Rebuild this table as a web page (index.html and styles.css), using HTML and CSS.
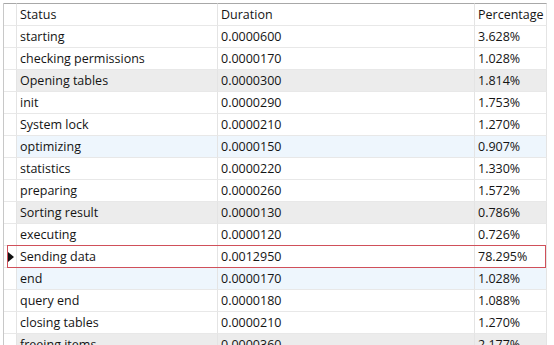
FILE: index.html
```html
<!DOCTYPE html>
<html lang="en">
<head>
    <meta charset="UTF-8">
    <title>Query Profile</title>
    <link rel="stylesheet" href="styles.css">
</head>
<body>
    <div class="grid">
        <table>
            <thead>
                <tr>
                    <th class="ind"></th>
                    <th class="col-status">Status</th>
                    <th class="col-duration">Duration</th>
                    <th class="col-pct">Percentage</th>
                </tr>
            </thead>
            <tbody>
                <tr><td class="ind"></td><td>starting</td><td>0.0000600</td><td>3.628%</td></tr>
                <tr><td class="ind"></td><td>checking permissions</td><td>0.0000170</td><td>1.028%</td></tr>
                <tr class="gray"><td class="ind"></td><td>Opening tables</td><td>0.0000300</td><td>1.814%</td></tr>
                <tr><td class="ind"></td><td>init</td><td>0.0000290</td><td>1.753%</td></tr>
                <tr><td class="ind"></td><td>System lock</td><td>0.0000210</td><td>1.270%</td></tr>
                <tr class="blue"><td class="ind"></td><td>optimizing</td><td>0.0000150</td><td>0.907%</td></tr>
                <tr><td class="ind"></td><td>statistics</td><td>0.0000220</td><td>1.330%</td></tr>
                <tr><td class="ind"></td><td>preparing</td><td>0.0000260</td><td>1.572%</td></tr>
                <tr class="gray"><td class="ind"></td><td>Sorting result</td><td>0.0000130</td><td>0.786%</td></tr>
                <tr><td class="ind"></td><td>executing</td><td>0.0000120</td><td>0.726%</td></tr>
                <tr class="selected">
                    <td class="ind"><span class="focus"></span><span class="arrow"></span></td>
                    <td>Sending data</td><td>0.0012950</td><td>78.295%</td>
                </tr>
                <tr class="blue"><td class="ind"></td><td>end</td><td>0.0000170</td><td>1.028%</td></tr>
                <tr><td class="ind"></td><td>query end</td><td>0.0000180</td><td>1.088%</td></tr>
                <tr><td class="ind"></td><td>closing tables</td><td>0.0000210</td><td>1.270%</td></tr>
                <tr class="gray"><td class="ind"></td><td>freeing items</td><td>0.0000360</td><td>2.177%</td></tr>
            </tbody>
        </table>
    </div>
</body>
</html>
```

FILE: styles.css
```css
* {
    margin: 0;
    padding: 0;
    box-sizing: border-box;
}

body {
    font-family: 'Open Sans', 'Noto Sans', sans-serif;
    font-size: 12.5px;
    color: #141414;
    background: white;
    overflow: hidden;
}

.grid {
    padding: 3px 0 0 3px;
}

table {
    border-collapse: separate;
    border-spacing: 0;
    table-layout: fixed;
    width: 543px;
    border-left: 1px solid #c8c8c8;
}

th, td {
    height: 22px;
    padding: 0 3px;
    text-align: left;
    font-weight: normal;
    white-space: nowrap;
    overflow: hidden;
    border-right: 1px solid #e4e4e4;
    border-bottom: 1px solid #e8e8e8;
}

th {
    height: 23px;
    border-top: 1px solid #a8a8a8;
}

.ind {
    width: 13px;
    padding: 0;
    position: relative;
    overflow: visible;
    background: white;
}

.col-status {
    width: 201px;
}

.col-duration {
    width: 257px;
}

.col-pct {
    width: 72px;
}

tr.gray td {
    background: #ececec;
}

tr.blue td {
    background: #eef6fd;
}

tr.gray td.ind, tr.blue td.ind {
    background: white;
}

.focus {
    position: absolute;
    left: 3px;
    top: -1px;
    width: 539px;
    height: 23px;
    border: 1px solid #d0505a;
    z-index: 2;
    pointer-events: none;
}

.arrow {
    position: absolute;
    left: 4px;
    top: 6px;
    width: 0;
    height: 0;
    border-top: 5px solid transparent;
    border-bottom: 5px solid transparent;
    border-left: 6px solid #111;
    z-index: 3;
}
```
